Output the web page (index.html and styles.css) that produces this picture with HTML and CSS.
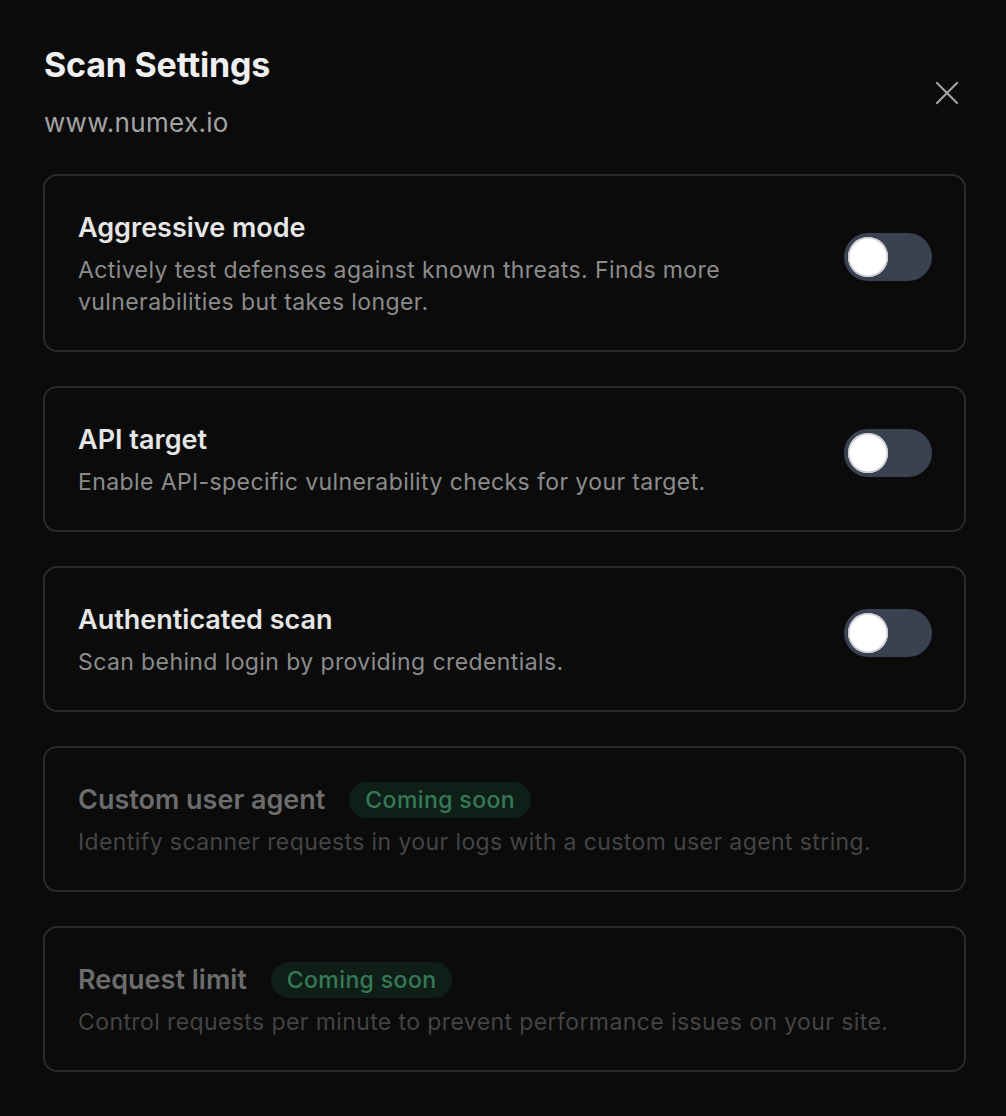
FILE: index.html
```html
<!DOCTYPE html>
<html lang="en">
<head>
<meta charset="utf-8">
<title>Scan Settings</title>
<link rel="stylesheet" href="styles.css">
</head>
<body>
<div class="panel">
  <header class="header">
    <div class="heading">
      <h1 class="title">Scan Settings</h1>
      <div class="subtitle">www.numex.io</div>
    </div>
    <button class="close" aria-label="Close">
      <svg width="24" height="24" viewBox="0 0 24 24" fill="none" stroke="currentColor" stroke-width="2" stroke-linecap="square">
        <path d="M2 2L22 22M22 2L2 22"/>
      </svg>
    </button>
  </header>

  <div class="list">
    <section class="card">
      <div class="text">
        <div class="row"><h2 class="name">Aggressive mode</h2></div>
        <p class="desc">Actively test defenses against known threats. Finds more vulnerabilities but takes longer.</p>
      </div>
      <span class="toggle"><span class="knob"></span></span>
    </section>

    <section class="card">
      <div class="text">
        <div class="row"><h2 class="name">API target</h2></div>
        <p class="desc">Enable API-specific vulnerability checks for your target.</p>
      </div>
      <span class="toggle"><span class="knob"></span></span>
    </section>

    <section class="card">
      <div class="text">
        <div class="row"><h2 class="name">Authenticated scan</h2></div>
        <p class="desc">Scan behind login by providing credentials.</p>
      </div>
      <span class="toggle"><span class="knob"></span></span>
    </section>

    <section class="card disabled">
      <div class="text">
        <div class="row"><h2 class="name">Custom user agent</h2><span class="badge">Coming soon</span></div>
        <p class="desc">Identify scanner requests in your logs with a custom user agent string.</p>
      </div>
    </section>

    <section class="card disabled">
      <div class="text">
        <div class="row"><h2 class="name">Request limit</h2><span class="badge">Coming soon</span></div>
        <p class="desc">Control requests per minute to prevent performance issues on your site.</p>
      </div>
    </section>
  </div>
</div>
</body>
</html>
```

FILE: styles.css
```css
* { box-sizing: border-box; }

html, body {
  margin: 0;
  background: #0b0b0b;
}

body {
  font-family: Inter, "Noto Sans", "Liberation Sans", sans-serif;
  color: #e8e8e8;
}

.panel {
  padding: 44px 40px 44px 43px;
}

.header {
  display: flex;
  justify-content: space-between;
  align-items: center;
}

.title {
  margin: 0 0 0 1px;
  font-size: 34px;
  line-height: 42px;
  font-weight: 700;
  letter-spacing: -0.2px;
  color: #f0f0f0;
}

.subtitle {
  margin: 20px 0 0 1px;
  font-size: 26px;
  line-height: 34px;
  letter-spacing: 0.3px;
  color: #a3a3a3;
}

.close {
  background: none;
  border: 0;
  padding: 0;
  margin: 2px 7px 0 0;
  width: 24px;
  height: 24px;
  color: #a6a6a6;
  display: flex;
}

.list {
  margin-top: 34px;
  display: flex;
  flex-direction: column;
  gap: 34px;
}

.card {
  display: flex;
  align-items: center;
  gap: 24px;
  border: 2px solid #2a2a2a;
  border-radius: 14px;
  padding: 32px 32px 32px 33px;
}

.text {
  flex: 1;
  min-width: 0;
}

.row {
  display: flex;
  align-items: center;
  gap: 24px;
  height: 40px;
}

.name {
  margin: 0;
  font-size: 27px;
  line-height: 40px;
  font-weight: 600;
  color: #e6e6e6;
}

.desc {
  margin: 6px 0 0;
  font-size: 23px;
  line-height: 32px;
  letter-spacing: 0.4px;
  color: #8c8c8c;
}

.toggle {
  flex: none;
  width: 88px;
  height: 48px;
  border-radius: 24px;
  background: #3a4151;
  display: flex;
  align-items: center;
  padding: 0 4px;
  margin-bottom: 12px;
}

.knob {
  width: 40px;
  height: 40px;
  border-radius: 50%;
  background: #ffffff;
  box-shadow: inset 0 0 0 1.5px #c9ccd2;
}

.disabled .name { color: #6c6c6c; }
.disabled .desc { color: #444444; }

.badge {
  display: inline-flex;
  align-items: center;
  height: 36px;
  padding: 0 16px;
  border-radius: 18px;
  background: #0f1f18;
  color: #357a55;
  font-size: 23px;
  letter-spacing: 0.4px;
  font-weight: 500;
}
```
